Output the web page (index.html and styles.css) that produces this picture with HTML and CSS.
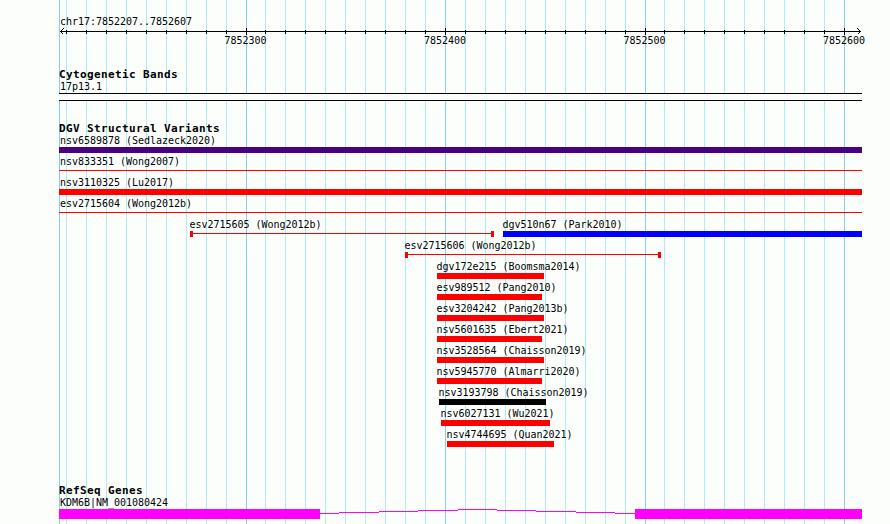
FILE: index.html
```
<!DOCTYPE html>
<html lang="en">
<head>
<meta charset="utf-8">
<title>chr17:7852207..7852607</title>
<link rel="stylesheet" href="styles.css">
</head>
<body>
<main class="browser">
<svg class="grid" width="890" height="524" shape-rendering="crispEdges" aria-hidden="true">
<path class="minor" d="M66.5 0V524M86.5 0V524M106.5 0V524M126.5 0V524M146.5 0V524M166.5 0V524M186.5 0V524M206.5 0V524M226.5 0V524M265.5 0V524M285.5 0V524M305.5 0V524M325.5 0V524M345.5 0V524M365.5 0V524M385.5 0V524M405.5 0V524M425.5 0V524M465.5 0V524M485.5 0V524M505.5 0V524M525.5 0V524M545.5 0V524M565.5 0V524M585.5 0V524M605.5 0V524M625.5 0V524M664.5 0V524M684.5 0V524M704.5 0V524M724.5 0V524M744.5 0V524M764.5 0V524M784.5 0V524M804.5 0V524M824.5 0V524"/>
<path class="major" d="M59.5 0V524M246.5 0V524M445.5 0V524M645.5 0V524M844.5 0V524"/>
</svg>
<section class="overview">
<div class="label">chr17:7852207..7852607</div>
<svg class="axis" width="803" height="7" shape-rendering="crispEdges">
<path d="M1 3.5H802M7.500 2V6M27.500 2V6M47.500 2V6M67.500 2V6M87.500 2V6M107.500 2V6M127.500 2V6M147.500 2V6M167.500 2V6M187.500 0V7M206.500 2V6M226.500 2V6M246.500 2V6M266.500 2V6M286.500 2V6M306.500 2V6M326.500 2V6M346.500 2V6M366.500 2V6M386.500 0V7M406.500 2V6M426.500 2V6M446.500 2V6M466.500 2V6M486.500 2V6M506.500 2V6M526.500 2V6M546.500 2V6M566.500 2V6M586.500 0V7M605.500 2V6M625.500 2V6M645.500 2V6M665.500 2V6M685.500 2V6M705.500 2V6M725.500 2V6M745.500 2V6M765.500 2V6M785.500 0V7"/>
<path d="M4.500 0.500L1.500 3.500L4.500 6.500M798.500 0.500L801.500 3.500L798.500 6.500"/>
</svg>
<div class="numbers"><span>7852300</span><span>7852400</span><span>7852500</span><span>7852600</span></div>
</section>
<section class="bands">
<h2>Cytogenetic Bands</h2>
<div class="label">17p13.1</div>
<div class="band"></div>
</section>
<section class="variants">
<h2>DGV Structural Variants</h2>
<div class="track full"><div class="label">nsv6589878 (Sedlazeck2020)</div><div class="bar indigo"></div></div>
<div class="track full"><div class="label">nsv833351 (Wong2007)</div><div class="bar line"></div></div>
<div class="track full"><div class="label">nsv3110325 (Lu2017)</div><div class="bar"></div></div>
<div class="track full"><div class="label">esv2715604 (Wong2012b)</div><div class="bar line"></div></div>
<div class="pair">
<div class="track" style="width:304px"><div class="label">esv2715605 (Wong2012b)</div><div class="bar capped"></div></div>
<div class="track" style="width:359px"><div class="label">dgv510n67 (Park2010)</div><div class="bar blue"></div></div>
</div>
<div class="track" style="margin-left:346px;width:256px"><div class="label">esv2715606 (Wong2012b)</div><div class="bar capped"></div></div>
<div class="track" style="margin-left:378px;width:107px"><div class="label">dgv172e215 (Boomsma2014)</div><div class="bar"></div></div>
<div class="track" style="margin-left:378px;width:105px"><div class="label">esv989512 (Pang2010)</div><div class="bar"></div></div>
<div class="track" style="margin-left:378px;width:107px"><div class="label">esv3204242 (Pang2013b)</div><div class="bar"></div></div>
<div class="track" style="margin-left:378px;width:105px"><div class="label">nsv5601635 (Ebert2021)</div><div class="bar"></div></div>
<div class="track" style="margin-left:378px;width:107px"><div class="label">nsv3528564 (Chaisson2019)</div><div class="bar"></div></div>
<div class="track" style="margin-left:378px;width:105px"><div class="label">nsv5945770 (Almarri2020)</div><div class="bar"></div></div>
<div class="track" style="margin-left:380px;width:107px"><div class="label">nsv3193798 (Chaisson2019)</div><div class="bar black"></div></div>
<div class="track" style="margin-left:382px;width:109px"><div class="label">nsv6027131 (Wu2021)</div><div class="bar"></div></div>
<div class="track" style="margin-left:388px;width:107px"><div class="label">nsv4744695 (Quan2021)</div><div class="bar"></div></div>
</section>
<section class="genes">
<h2>RefSeq Genes</h2>
<div class="label">KDM6B|NM_001080424</div>
<div class="gene"><div class="exon"></div>
<svg class="intron" width="315" height="10" shape-rendering="crispEdges"><path d="M0 4.500H19M19 3.500H59M59 2.500H98M98 1.500H138M138 0.500H177M177 1.500H216M216 2.500H256M256 3.500H295M295 4.500H315"/></svg>
<div class="exon"></div></div>
</section>
</main>
</body>
</html>
```
FILE: styles.css
```
body {
  margin: 0;
  background: #fcfefc;
  color: #000;
  font: 10px/14px "DejaVu Sans Mono", monospace;
}
.browser {
  position: relative;
  box-sizing: border-box;
  width: 890px;
  height: 524px;
  padding: 15px 28px 0 59px;
  overflow: hidden;
}
.grid {
  position: absolute;
  top: 0;
  left: 0;
  z-index: -1;
}
.grid path { fill: none; }
.minor { stroke: #afeeee; }
.major { stroke: #87ceeb; }
section { display: flow-root; }
.overview { height: 53px; }
.label {
  height: 12px;
  padding-left: 1px;
  letter-spacing: -0.02px;
  white-space: nowrap;
}
.axis {
  display: block;
  margin-top: 1px;
  fill: none;
  stroke: #000;
}
.numbers {
  display: flex;
  gap: 157.5px;
  margin: -1px 0 0 165.5px;
  letter-spacing: -0.02px;
}
h2 {
  height: 12px;
  margin: 0;
  font-size: 11px;
  line-height: 14px;
  letter-spacing: 0.38px;
}
.bands { height: 54px; }
.band {
  box-sizing: border-box;
  width: 803px;
  height: 8px;
  margin-top: 1px;
  border: solid #000;
  border-width: 1px 0;
  background: #fcfefc;
}
.variants { height: 362px; }
.track { height: 21px; }
.track .label {
  height: 13px;
  padding-left: 0;
  text-indent: -0.5px;
}
.full { width: 803px; }
.full .label {
  padding-left: 1px;
  text-indent: 0;
}
.bar {
  height: 6px;
  background: red;
}
.line {
  height: 1px;
  margin-top: 2px;
}
.capped {
  box-sizing: border-box;
  border: solid red;
  border-width: 0 3px;
  background: linear-gradient(red, red) 0 2px / 100% 1px no-repeat;
}
.indigo { background: indigo; }
.blue { background: blue; }
.black { background: #000; }
.pair {
  display: flex;
  gap: 9px;
  margin-left: 131px;
}
.gene {
  display: flex;
  margin-top: 1px;
}
.exon {
  width: 261px;
  height: 10px;
  background: magenta;
}
.exon:last-child { width: 227px; }
.intron {
  fill: none;
  stroke: magenta;
}
```
